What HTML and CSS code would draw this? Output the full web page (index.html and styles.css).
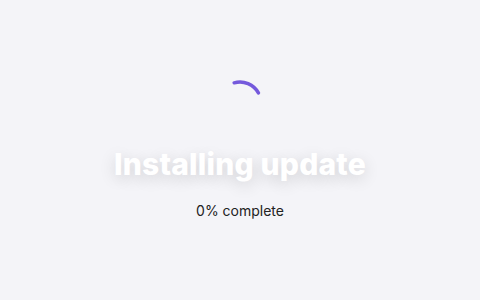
FILE: index.html
```html
<!DOCTYPE html>
<html lang="en">
<head>
    <meta charset="UTF-8">
    <meta name="viewport" content="width=device-width, initial-scale=1.0">
    <title>Installing update</title>
    <link rel="stylesheet" href="styles.css">
</head>
<body>
    <div class="screen">
        <svg class="spinner" width="46" height="46" viewBox="0 0 46 46">
            <circle class="arc" cx="23" cy="23" r="21"></circle>
        </svg>
        <h1 class="title">Installing update</h1>
        <p class="progress">0% complete</p>
    </div>
</body>
</html>
```

FILE: styles.css
```css
body {
    margin: 0;
    background: #f4f4f8;
    font-family: Inter, "Noto Sans", sans-serif;
}

.screen {
    height: 300px;
    display: flex;
    flex-direction: column;
    align-items: center;
    justify-content: center;
}

.spinner {
    display: block;
    margin-bottom: 20px;
}

.spinner .arc {
    fill: none;
    stroke-width: 3.5;
    stroke: #7459dc;
    stroke-linecap: round;
    stroke-dasharray: 28 132;
    transform: rotate(-106deg);
    transform-origin: 23px 23px;
}

.title {
    margin: 0;
    font-size: 30px;
    font-weight: 800;
    line-height: 36px;
    color: #ffffff;
    letter-spacing: 0.2px;
    text-shadow: 0 4px 16px rgba(0, 0, 0, 0.16);
}

.progress {
    margin: 20px 0 0;
    font-size: 14px;
    line-height: 18px;
    color: #222;
}
```
